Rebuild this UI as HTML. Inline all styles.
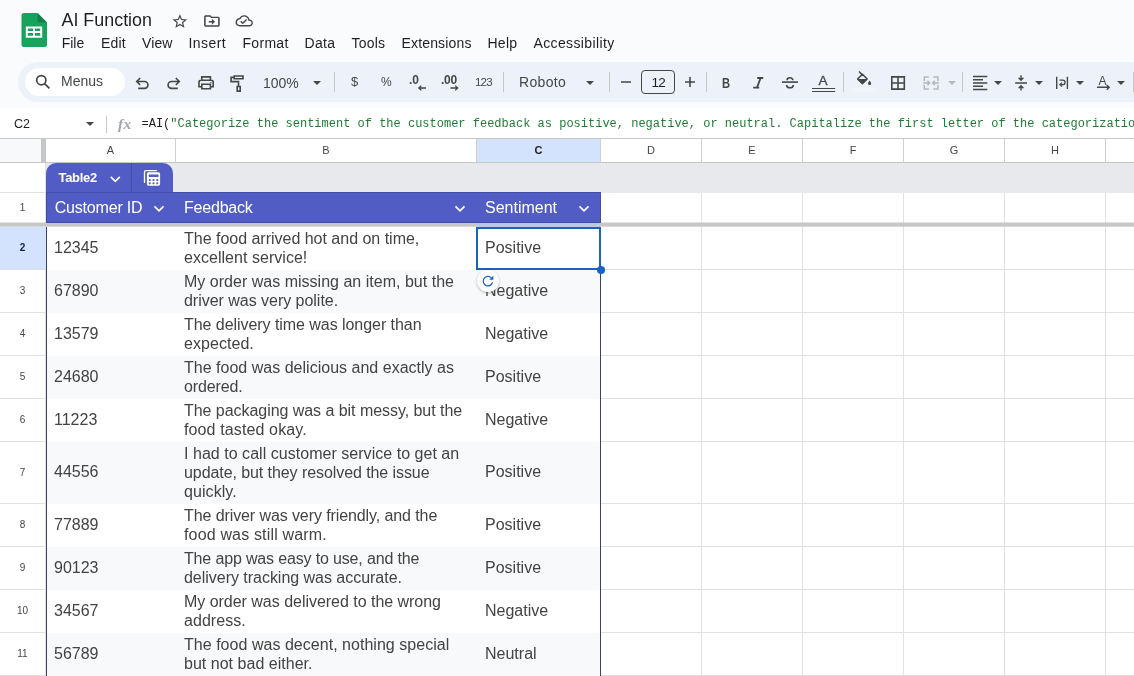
<!DOCTYPE html>
<html>
<head>
<meta charset="utf-8">
<title>AI Function</title>
<style>
*{box-sizing:border-box;margin:0;padding:0}
html,body{width:1134px;height:676px;overflow:hidden;background:#f9fbfd;font-family:"Liberation Sans",sans-serif;color:#1f1f1f}
.abs{position:absolute}
.t{position:absolute;white-space:nowrap;line-height:1}
#title{left:61.500px;top:12px;font-size:17.900px;color:#1f1f1f}
.menu{top:36px;font-size:14px;color:#1f1f1f}
#toolbar{left:18px;top:62px;width:1140px;height:40px;border-radius:20px;background:#edf2fa}
#search{left:25px;top:67.500px;width:100px;height:28.500px;border-radius:15px;background:#fff}
.tb{font-size:14px;color:#444746}
.sep{position:absolute;top:72px;width:1px;height:20px;background:#c7c7c7}
.tri{position:absolute;width:0;height:0;border-left:4px solid transparent;border-right:4px solid transparent;border-top:4px solid #444746}
#fbar{left:0;top:108px;width:1134px;height:30px;background:#fff}
#fbarline{left:0;top:138px;width:1134px;height:1px;background:#c7c7c7}
#grid{left:0;top:139px;width:1134px;height:537px;background:#fff}
.vl{position:absolute;width:1px;background:#e1e1e1}
.hl{position:absolute;height:1px;background:#e1e1e1}
.ch{position:absolute;top:139px;height:23px;font-size:11px;color:#444746;text-align:center;line-height:23px}
.rh{position:absolute;left:0;width:45px;font-size:10px;color:#444746;text-align:center}
.cell{position:absolute;font-size:16px;color:#434343;line-height:19px;display:flex;flex-direction:column;justify-content:center;white-space:nowrap}
.hd{position:absolute;font-size:16px;color:#fff;line-height:29px;top:193px;height:29px;white-space:nowrap}
svg{position:absolute;left:0;top:0;overflow:visible}
#root{position:absolute;left:0;top:0;width:1134px;height:676px;overflow:hidden;will-change:opacity}
.s{fill:none;stroke:#444746;stroke-width:1.600;stroke-linecap:butt;stroke-linejoin:miter}
.f{fill:#444746;stroke:none}
</style>
</head>
<body>
<div id="root">
<svg width="1134" height="60" viewBox="0 0 1134 60">
  <!-- sheets logo -->
  <path d="M24 13h13.500l9.500 9.500V44.500a2.500 2.500 0 0 1-2.500 2.500H24a2.500 2.500 0 0 1-2.500-2.500V15.500A2.500 2.500 0 0 1 24 13z" fill="#18a35d"/>
  <path d="M37.500 13l9.500 9.500h-7a2.500 2.500 0 0 1-2.500-2.500z" fill="#128048"/>
  <path d="M25.800 26.400h16.400v11.300H25.800zM27.800 28.400v2.700h5.200v-2.700zM35 28.400v2.700h5.200v-2.700zM27.800 33.100v2.600h5.200v-2.600zM35 33.100v2.600h5.200v-2.600z" fill="#fff" fill-rule="evenodd"/>
  <!-- star -->
  <path class="f" transform="translate(171.140 12.770) scale(0.730 0.716)" d="M22 9.240l-7.190-.62L12 2 9.190 8.630 2 9.240l5.460 4.730L5.820 21 12 17.270 18.180 21l-1.630-7.030L22 9.240zM12 15.400l-3.760 2.270 1-4.280-3.320-2.880 4.380-.38L12 6.100l1.710 4.040 4.380.38-3.320 2.880 1 4.280L12 15.400z"/>
  <!-- folder move -->
  <path class="f" fill-rule="evenodd" transform="translate(202.540 12.300) scale(0.780 0.725)" d="M20 6h-8l-2-2H4c-1.100 0-2 .9-2 2v12c0 1.100.9 2 2 2h16c1.100 0 2-.9 2-2V8c0-1.100-.9-2-2-2zM20 18H4V6h5.170l2 2H20v10zM12 17l4-4-4-4v3H8v2h4v3z"/>
  <!-- cloud done -->
  <path class="f" fill-rule="evenodd" transform="translate(235.500 12.400) scale(0.725 0.700)" d="M19.350 10.040C18.670 6.590 15.640 4 12 4 9.110 4 6.600 5.640 5.350 8.040 2.340 8.360 0 10.910 0 14c0 3.310 2.690 6 6 6h13c2.760 0 5-2.240 5-5 0-2.640-2.050-4.780-4.650-4.960zM19 18H6c-2.210 0-4-1.790-4-4 0-2.050 1.530-3.760 3.560-3.970l1.070-.11.500-.95C8.080 7.140 9.940 6 12 6c2.620 0 4.880 1.860 5.390 4.430l.3 1.500 1.530.11c1.560.1 2.780 1.410 2.780 2.960 0 1.650-1.350 3-3 3zM10 14.180l-2.090-2.090L6.500 13.500 10 17l6.010-6.010-1.410-1.410z"/>
</svg>
<div class="t" id="title">AI Function</div>
<div class="t menu" style="left:61.7px;letter-spacing:0px">File</div>
<div class="t menu" style="left:101px;letter-spacing:0.2px">Edit</div>
<div class="t menu" style="left:142px;letter-spacing:0.1px">View</div>
<div class="t menu" style="left:188.5px;letter-spacing:0.44px">Insert</div>
<div class="t menu" style="left:242.5px;letter-spacing:0.3px">Format</div>
<div class="t menu" style="left:304.5px;letter-spacing:0.3px">Data</div>
<div class="t menu" style="left:351.5px;letter-spacing:0.2px">Tools</div>
<div class="t menu" style="left:401.5px;letter-spacing:0.16px">Extensions</div>
<div class="t menu" style="left:487.5px;letter-spacing:0.25px">Help</div>
<div class="t menu" style="left:533.5px;letter-spacing:0.37px">Accessibility</div>
<div class="abs" id="toolbar"></div>
<div class="abs" id="search"></div>
<div class="sep" style="left:334px"></div>
<div class="sep" style="left:503px"></div>
<div class="sep" style="left:609px"></div>
<div class="sep" style="left:706px"></div>
<div class="sep" style="left:843px"></div>
<div class="sep" style="left:962px"></div>
<div class="sep" style="left:1133px"></div>
<div class="tri" style="left:313px;top:81px;border-top-color:#444746"></div>
<div class="tri" style="left:586px;top:81px;border-top-color:#444746"></div>
<div class="tri" style="left:948px;top:81px;border-top-color:#b4b7b9"></div>
<div class="tri" style="left:994px;top:81px;border-top-color:#444746"></div>
<div class="tri" style="left:1035px;top:81px;border-top-color:#444746"></div>
<div class="tri" style="left:1076px;top:81px;border-top-color:#444746"></div>
<div class="tri" style="left:1117px;top:81px;border-top-color:#444746"></div>
<div class="t tb" style="left:61px;top:74px">Menus</div>
<div class="t tb" style="left:263px;top:76px;font-size:14px">100%</div>
<div class="t tb" style="left:351px;top:75px;font-size:13px">$</div>
<div class="t tb" style="left:381px;top:75.500px;font-size:12px">%</div>
<div class="t tb" style="left:409px;top:74px;font-size:12px;font-weight:bold">.0</div>
<div class="t tb" style="left:441px;top:74px;font-size:12px;font-weight:bold;letter-spacing:-0.300px">.00</div>
<div class="t tb" style="left:475px;top:77px;font-size:11.500px;letter-spacing:-0.800px">123</div>
<div class="t tb" style="left:519px;top:75px;font-size:14px;letter-spacing:0.350px">Roboto</div>
<div class="abs" style="left:641px;top:70px;width:34px;height:24px;border:1px solid #444746;border-radius:4px"></div>
<div class="t tb" style="left:651.500px;top:76px;font-size:13.500px;color:#1f1f1f;letter-spacing:-0.800px">12</div>
<div class="t tb" style="left:722px;top:75.500px;font-size:14px;font-weight:bold;transform:scaleX(0.800);transform-origin:left">B</div>
<div class="t tb" style="left:818.500px;top:73.500px;font-size:13.500px;-webkit-text-stroke:0.300px #444746">A</div>
<div class="t tb" style="left:1098.500px;top:74.500px;font-size:12px">A</div>
<svg width="1134" height="110" viewBox="0 0 1134 110">
  <!-- search -->
  <circle class="s" style="stroke-width:1.700" cx="41.300" cy="80.200" r="4.600"/>
  <path class="s" style="stroke-width:1.800" d="M44.600 83.600l4.800 4.800"/>
  <!-- undo -->
  <path class="s" d="M140.200 78l-3.500 3.500 3.500 3.500M137 81.500h7.500a3.450 3.450 0 0 1 0 6.900H138.200"/>
  <!-- redo -->
  <path class="s" d="M175.800 78l3.500 3.500-3.500 3.500M179 81.500h-7.500a3.450 3.450 0 0 0 0 6.900H177.800"/>
  <!-- print -->
  <path class="s" d="M201.800 80V76.900h8.600V80M201.800 86.800H199V82.300a2 2 0 0 1 2-2h10.200a2 2 0 0 1 2 2V86.800H210.400"/>
  <path class="s" d="M201.800 84.300h8.600v4.500h-8.600z"/>
  <circle class="f" cx="210.900" cy="82.600" r="0.700"/>
  <!-- paint format -->
  <path class="s" d="M234.200 76h8.800v2.800h-8.800zM234.200 77.400H231.100V81.600H238.500V86"/>
  <path class="s" d="M237.200 86.500h3v4.600h-3z"/>
  <!-- decrease decimal arrow -->
  <path class="s" style="stroke-width:1.300" d="M426 88h-7M421.300 85.600l-2.500 2.400 2.500 2.400"/>
  <!-- increase decimal arrow -->
  <path class="s" style="stroke-width:1.300" d="M450.500 88h7M455.200 85.600l2.500 2.400-2.500 2.400"/>
  <!-- minus / plus -->
  <path class="s" d="M621 82h10M685 82h10M690 77v10"/>
  <!-- italic -->
  <path class="s" style="stroke-width:1.800" d="M757.200 78h6M753.200 87.600h6M760.600 78l-3.600 9.600"/>
  <!-- strikethrough -->
  <path class="s" d="M782 82.100h16"/>
  <path class="s" d="M792.900 80.300a2.950 2.500 0 0 0-5.900 0M786.600 84.900a3.350 2.800 0 0 0 6.700 0"/>
  <!-- text colour underline -->
  <path class="s" style="stroke-width:1" d="M812 88.500h23.200M812 91.500h23.200"/>
  <!-- fill colour -->
  <path class="s" style="stroke-width:1.500" d="M859 71.500l3.600 3.600"/>
  <path class="s" style="stroke-width:1.500;stroke-linejoin:round" d="M862.400 74.200l4.800 4.800-4.800 4.800-4.800-4.800z"/>
  <path class="f" d="M857.600 79h9.600l-4.800 4.800z"/>
  <path class="f" d="M869.600 80.500c.9 1.300 1.600 2.200 1.600 3a1.600 1.600 0 0 1-3.200 0c0-.8.700-1.700 1.600-3z"/>
  <rect x="852" y="88" width="23.500" height="4" fill="#f2f5fb"/>
  <!-- borders -->
  <path class="s" d="M891.800 76.900h12.500v12.200h-12.500zM898 76.900v12.200M891.800 83h12.500"/>
  <!-- merge (disabled) -->
  <path class="s" style="stroke:#b4b7b9;stroke-width:1.500" d="M928.800 76.900h-4.500v4.300M933.400 76.900h4.500v4.300M928.800 89.100h-4.500v-4.300M933.400 89.100h4.500v-4.300M923.300 83h6M927.400 80.800l2.200 2.200-2.200 2.200M938.900 83h-6M934.800 80.800l-2.200 2.200 2.200 2.200"/>
  <!-- align left -->
  <path class="s" style="stroke-width:1.400" d="M973 76.500h14.300M973 79.800h10M973 83h14.300M973 86.300h10M973 89.500h14.300"/>
  <!-- vertical align middle -->
  <path class="s" style="stroke-width:1.400" d="M1015.200 83h11.800M1021 75.300v4.400M1018.600 77.800l2.400 2.400 2.400-2.400M1021 90.600v-4.400M1018.600 88.200l2.400-2.400 2.400 2.400"/>
  <!-- wrap -->
  <path class="s" style="stroke-width:1.400" d="M1056.700 76.700v12.400M1067.400 76.700v12.400"/>
  <path class="s" style="stroke-width:1.300" d="M1059.500 80.200h3.300a2.200 2.200 0 0 1 0 4.400h-2.400M1062 82.600l-2 2 2 2"/>
  <!-- text rotation -->
  <path class="s" style="stroke-width:1.400" d="M1097 87.300h12M1106.700 84.900l2.500 2.400-2.500 2.400"/>
</svg>
<div class="abs" id="fbar"></div>
<div class="abs" id="fbarline"></div>
<div class="t" style="left:14px;top:117.500px;font-size:12.500px;color:#1f1f1f">C2</div>
<div class="tri" style="left:86px;top:122px"></div>
<div class="abs" style="left:106px;top:116px;width:1px;height:17px;background:#c7c7c7"></div>
<div class="t" style="left:118px;top:115.500px;font-family:'Liberation Serif',serif;font-style:italic;font-weight:bold;font-size:15.500px;color:#a3a7ab;letter-spacing:0.300px">fx</div>
<div class="t" id="formula" style="left:141.500px;top:118.300px;font-family:'Liberation Mono',monospace;font-size:12px;color:#237a38"><span style="color:#1f1f1f">=AI(</span>"Categorize the sentiment of the customer feedback as positive, negative, or neutral. Capitalize the first letter of the categorization."</div>
<div class="abs" id="grid"></div>
<div class="abs" style="left:0;top:139px;width:41px;height:23px;background:#f8f9fa"></div>
<div class="abs" style="left:477px;top:139px;width:123px;height:23px;background:#d3e3fd"></div>
<div class="abs" style="left:47px;top:270px;width:553px;height:43px;background:#f8f9fa"></div>
<div class="abs" style="left:47px;top:356px;width:553px;height:43px;background:#f8f9fa"></div>
<div class="abs" style="left:47px;top:442px;width:553px;height:62px;background:#f8f9fa"></div>
<div class="abs" style="left:47px;top:547px;width:553px;height:43px;background:#f8f9fa"></div>
<div class="abs" style="left:47px;top:633px;width:553px;height:43px;background:#f8f9fa"></div>
<div class="vl" style="left:701px;top:163px;height:513px"></div>
<div class="vl" style="left:802px;top:163px;height:513px"></div>
<div class="vl" style="left:903px;top:163px;height:513px"></div>
<div class="vl" style="left:1004px;top:163px;height:513px"></div>
<div class="vl" style="left:1105px;top:163px;height:513px"></div>
<div class="vl" style="left:175px;top:139px;height:23px;background:#d0d0d0"></div>
<div class="vl" style="left:476px;top:139px;height:23px;background:#d0d0d0"></div>
<div class="vl" style="left:600px;top:139px;height:23px;background:#d0d0d0"></div>
<div class="vl" style="left:701px;top:139px;height:23px;background:#d0d0d0"></div>
<div class="vl" style="left:802px;top:139px;height:23px;background:#d0d0d0"></div>
<div class="vl" style="left:903px;top:139px;height:23px;background:#d0d0d0"></div>
<div class="vl" style="left:1004px;top:139px;height:23px;background:#d0d0d0"></div>
<div class="vl" style="left:1105px;top:139px;height:23px;background:#d0d0d0"></div>
<div class="vl" style="left:45px;top:163px;height:513px"></div>
<div class="abs" style="left:0;top:227px;width:46px;height:43px;background:#d3e3fd"></div>
<div class="hl" style="left:0;top:162px;width:1134px;background:#c7c7c7"></div>
<div class="abs" style="left:46px;top:163px;width:1088px;height:30px;background:#e8e9ec"></div>
<div class="hl" style="left:0;top:192px;width:45px"></div>
<div class="hl" style="left:0;top:269px;width:45px"></div>
<div class="hl" style="left:601px;top:269px;width:533px"></div>
<div class="hl" style="left:0;top:312px;width:45px"></div>
<div class="hl" style="left:601px;top:312px;width:533px"></div>
<div class="hl" style="left:0;top:355px;width:45px"></div>
<div class="hl" style="left:601px;top:355px;width:533px"></div>
<div class="hl" style="left:0;top:398px;width:45px"></div>
<div class="hl" style="left:601px;top:398px;width:533px"></div>
<div class="hl" style="left:0;top:441px;width:45px"></div>
<div class="hl" style="left:601px;top:441px;width:533px"></div>
<div class="hl" style="left:0;top:503px;width:45px"></div>
<div class="hl" style="left:601px;top:503px;width:533px"></div>
<div class="hl" style="left:0;top:546px;width:45px"></div>
<div class="hl" style="left:601px;top:546px;width:533px"></div>
<div class="hl" style="left:0;top:589px;width:45px"></div>
<div class="hl" style="left:601px;top:589px;width:533px"></div>
<div class="hl" style="left:0;top:632px;width:45px"></div>
<div class="hl" style="left:601px;top:632px;width:533px"></div>
<div class="hl" style="left:0;top:675px;width:45px"></div>
<div class="hl" style="left:601px;top:675px;width:533px"></div>
<div class="abs" style="left:41px;top:139px;width:5px;height:24px;background:#c4c7c5"></div>
<svg width="1134" height="676" viewBox="0 0 1134 676"><rect x="0" y="222.500" width="1134" height="4.200" fill="#c6c8c8"/><rect x="477" y="222.500" width="123" height="4.200" fill="#b9c9e7"/></svg>
<div class="ch" style="left:46px;width:129px">A</div>
<div class="ch" style="left:176px;width:300px">B</div>
<div class="ch" style="left:477px;width:123px;font-weight:bold;color:#1f1f1f">C</div>
<div class="ch" style="left:601px;width:100px">D</div>
<div class="ch" style="left:702px;width:100px">E</div>
<div class="ch" style="left:803px;width:100px">F</div>
<div class="ch" style="left:904px;width:100px">G</div>
<div class="ch" style="left:1005px;width:100px">H</div>
<div class="rh" style="top:193px;height:29px;line-height:29px">1</div>
<div class="rh" style="top:227px;height:42px;line-height:42px;font-weight:bold;color:#0d2148">2</div>
<div class="rh" style="top:270px;height:42px;line-height:42px">3</div>
<div class="rh" style="top:313px;height:42px;line-height:42px">4</div>
<div class="rh" style="top:356px;height:42px;line-height:42px">5</div>
<div class="rh" style="top:399px;height:42px;line-height:42px">6</div>
<div class="rh" style="top:442px;height:61px;line-height:61px">7</div>
<div class="rh" style="top:504px;height:42px;line-height:42px">8</div>
<div class="rh" style="top:547px;height:42px;line-height:42px">9</div>
<div class="rh" style="top:590px;height:42px;line-height:42px">10</div>
<div class="rh" style="top:633px;height:42px;line-height:42px">11</div>
<div class="abs" style="left:46px;top:163px;width:127px;height:30px;background:#515dc4;border-radius:10px 10px 0 0"></div>
<div class="abs" style="left:131px;top:163px;width:1px;height:29px;background:#424dae"></div>
<div class="t" style="left:58.500px;top:170.500px;font-size:13px;font-weight:bold;color:#fff;letter-spacing:-0.300px">Table2</div>
<div class="abs" style="left:46px;top:192px;width:555px;height:31px;background:#515dc4"></div>
<div class="abs" style="left:46px;top:192px;width:555px;height:31px;border:1px solid #414ba8"></div>
<div class="abs" style="left:46px;top:192px;width:127px;height:1px;background:#424dae"></div>
<div class="hd" style="left:54.700px;letter-spacing:-0.190px">Customer ID</div>
<div class="hd" style="left:184px;letter-spacing:-0.200px">Feedback</div>
<div class="hd" style="left:485px">Sentiment</div>
<svg width="1134" height="676" viewBox="0 0 1134 676">
  <g fill="none" stroke="#fff" stroke-width="1.700">
    <path d="M110.800 176.800l4.500 4.500 4.500-4.500"/>
    <path d="M154.500 206.300l4.500 4.500 4.500-4.500"/>
    <path d="M455.500 206.300l4.500 4.500 4.500-4.500"/>
    <path d="M579.500 206.300l4.500 4.500 4.500-4.500"/>
    <!-- table/calculator icon -->
    <path d="M144.500 182.900v-10.800a1.500 1.500 0 0 1 1.500-1.500h10.800" stroke-width="1.300"/>
  </g>
  <rect x="146.900" y="172.300" width="13.200" height="13.400" rx="1.600" fill="#fff"/>
  <g fill="#515dc4"><rect x="148.700" y="174.400" width="9.900" height="2.500" rx="0.600"/>
  <rect x="148.800" y="179.200" width="1.900" height="1.800"/><rect x="152.550" y="179.200" width="1.900" height="1.800"/><rect x="156.350" y="179.200" width="1.900" height="1.800"/>
  <rect x="148.800" y="182.400" width="1.900" height="1.800"/><rect x="152.550" y="182.400" width="1.900" height="1.800"/><rect x="156.350" y="182.400" width="1.900" height="1.800"/></g>
</svg>
<div class="abs" style="left:46px;top:227px;width:1px;height:449px;background:#3a3f6b"></div>
<div class="abs" style="left:600px;top:227px;width:1px;height:449px;background:#3a3f6b"></div>
<div class="cell" style="left:54px;top:226px;height:42px">12345</div>
<div class="cell" style="left:184px;top:226px;height:42px;transform:translateY(0.700px)"><span style="display:block;letter-spacing:-0.013px">The food arrived hot and on time,</span><span style="display:block;letter-spacing:0.035px">excellent service!</span></div>
<div class="cell" style="left:485px;top:226px;height:42px">Positive</div>
<div class="cell" style="left:54px;top:269px;height:42px">67890</div>
<div class="cell" style="left:184px;top:269px;height:42px;transform:translateY(0.700px)"><span style="display:block;letter-spacing:0.014px">My order was missing an item, but the</span><span style="display:block;letter-spacing:-0.027px">driver was very polite.</span></div>
<div class="cell" style="left:485px;top:269px;height:42px">Negative</div>
<div class="cell" style="left:54px;top:312px;height:42px">13579</div>
<div class="cell" style="left:184px;top:312px;height:42px;transform:translateY(0.700px)"><span style="display:block;letter-spacing:-0.053px">The delivery time was longer than</span><span style="display:block;letter-spacing:0.050px">expected.</span></div>
<div class="cell" style="left:485px;top:312px;height:42px">Negative</div>
<div class="cell" style="left:54px;top:355px;height:42px">24680</div>
<div class="cell" style="left:184px;top:355px;height:42px;transform:translateY(0.700px)"><span style="display:block;letter-spacing:0.014px">The food was delicious and exactly as</span><span style="display:block;letter-spacing:-0.114px">ordered.</span></div>
<div class="cell" style="left:485px;top:355px;height:42px">Positive</div>
<div class="cell" style="left:54px;top:398px;height:42px">11223</div>
<div class="cell" style="left:184px;top:398px;height:42px;transform:translateY(0.700px)"><span style="display:block;letter-spacing:-0.046px">The packaging was a bit messy, but the</span><span style="display:block;letter-spacing:0.125px">food tasted okay.</span></div>
<div class="cell" style="left:485px;top:398px;height:42px">Negative</div>
<div class="cell" style="left:54px;top:441px;height:61px">44556</div>
<div class="cell" style="left:184px;top:441px;height:61px;transform:translateY(0.700px)"><span style="display:block;letter-spacing:0.033px">I had to call customer service to get an</span><span style="display:block;letter-spacing:-0.076px">update, but they resolved the issue</span><span style="display:block;letter-spacing:0.071px">quickly.</span></div>
<div class="cell" style="left:485px;top:441px;height:61px">Positive</div>
<div class="cell" style="left:54px;top:503px;height:42px">77889</div>
<div class="cell" style="left:184px;top:503px;height:42px;transform:translateY(0.700px)"><span style="display:block;letter-spacing:-0.094px">The driver was very friendly, and the</span><span style="display:block;letter-spacing:0.163px">food was still warm.</span></div>
<div class="cell" style="left:485px;top:503px;height:42px">Positive</div>
<div class="cell" style="left:54px;top:546px;height:42px">90123</div>
<div class="cell" style="left:184px;top:546px;height:42px;transform:translateY(0.700px)"><span style="display:block;letter-spacing:-0.155px">The app was easy to use, and the</span><span style="display:block;letter-spacing:-0.027px">delivery tracking was accurate.</span></div>
<div class="cell" style="left:485px;top:546px;height:42px">Positive</div>
<div class="cell" style="left:54px;top:589px;height:42px">34567</div>
<div class="cell" style="left:184px;top:589px;height:42px;transform:translateY(0.700px)"><span style="display:block;letter-spacing:-0.026px">My order was delivered to the wrong</span><span style="display:block;letter-spacing:0.057px">address.</span></div>
<div class="cell" style="left:485px;top:589px;height:42px">Negative</div>
<div class="cell" style="left:54px;top:632px;height:42px">56789</div>
<div class="cell" style="left:184px;top:632px;height:42px;transform:translateY(0.700px)"><span style="display:block;letter-spacing:0.031px">The food was decent, nothing special</span><span style="display:block;letter-spacing:0.022px">but not bad either.</span></div>
<div class="cell" style="left:485px;top:632px;height:42px">Neutral</div>
<div class="abs" style="left:476px;top:227px;width:125px;height:43px;border:2px solid #1b61c4"></div>
<div class="abs" style="left:597px;top:266px;width:8px;height:8px;border-radius:50%;background:#1b61c4"></div>
<div class="abs" style="left:477px;top:270px;width:22px;height:22px;border-radius:50%;background:#fff;box-shadow:0 1px 3px rgba(60,64,67,.28),0 1px 2px rgba(60,64,67,.12)"></div>
<svg width="1134" height="676" viewBox="0 0 1134 676"><path d="M491.300 277.900a4.700 4.700 0 1 0 1.200 4.400" fill="none" stroke="#1b61c4" stroke-width="1.250"/><path d="M493.300 275.700v4.100h-4.100z" fill="#1b61c4"/></svg>
</div>
</body>
</html>
